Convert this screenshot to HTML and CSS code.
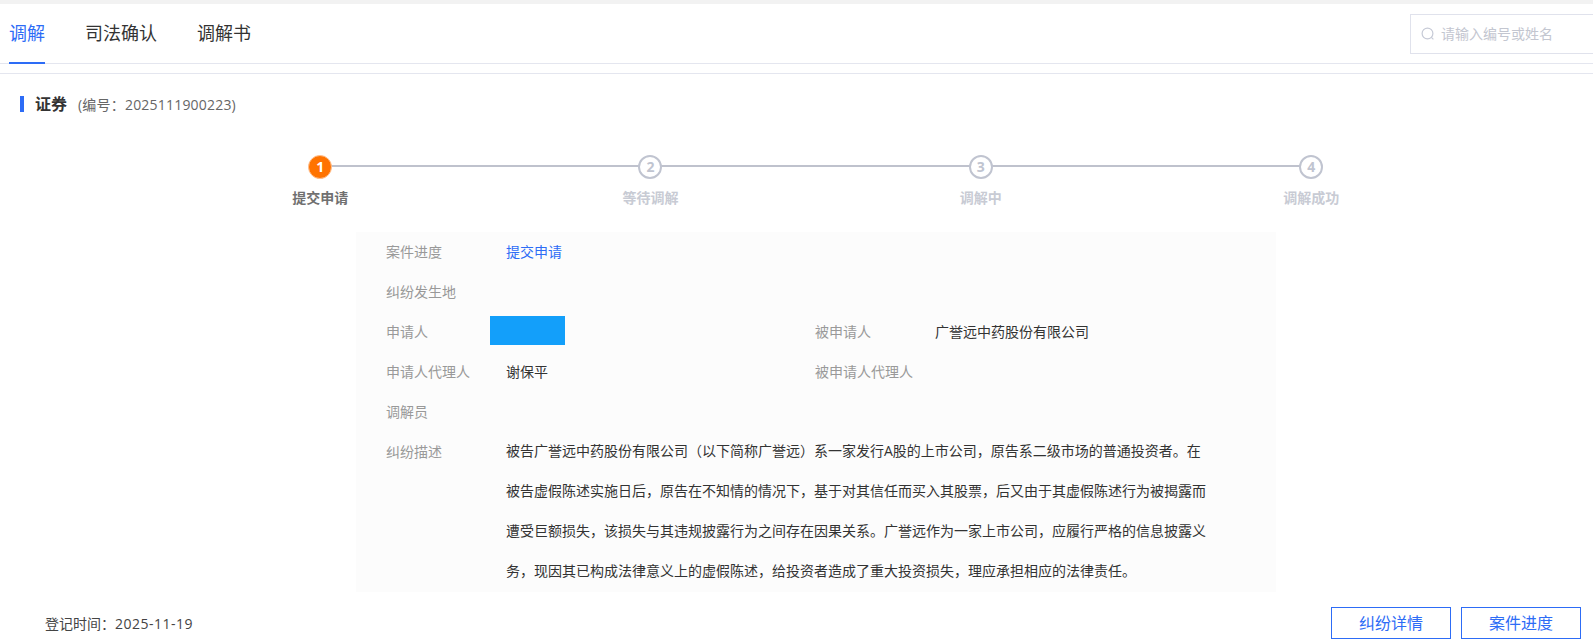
FILE: index.html
```html
<!DOCTYPE html>
<html lang="zh-CN">
<head>
<meta charset="utf-8">
<title>调解</title>
<link rel="stylesheet" href="styles.css">
</head>
<body>
<div class="page">
  <header class="topbar">
    <nav class="tabs">
      <a class="tab active">调解</a>
      <a class="tab">司法确认</a>
      <a class="tab">调解书</a>
    </nav>
    <div class="search">
      <svg class="search-icon" width="14" height="14" viewBox="0 0 14 14" fill="none" stroke="#c6cad6" stroke-width="1.2"><circle cx="6.5" cy="6.5" r="5.4"/><path d="M10.4 10.4 12.4 12.4"/></svg>
      <span class="placeholder">请输入编号或姓名</span>
    </div>
  </header>
  <div class="title-row">
    <h1 class="title">证券</h1>
    <span class="case-no">(编号&#xFF1A;2025111900223)</span>
  </div>
  <ol class="steps">
    <li class="step current"><span class="dot">1</span><span class="step-label">提交申请</span></li>
    <li class="step"><span class="dot">2</span><span class="step-label">等待调解</span></li>
    <li class="step"><span class="dot">3</span><span class="step-label">调解中</span></li>
    <li class="step"><span class="dot">4</span><span class="step-label">调解成功</span></li>
  </ol>
  <section class="panel">
    <div class="row"><span class="label">案件进度</span><span class="value link">提交申请</span></div>
    <div class="row"><span class="label">纠纷发生地</span></div>
    <div class="row two">
      <div class="cell"><span class="label">申请人</span><span class="value"></span><span class="redact"></span></div>
      <div class="cell"><span class="label">被申请人</span><span class="value">广誉远中药股份有限公司</span></div>
    </div>
    <div class="row two">
      <div class="cell"><span class="label">申请人代理人</span><span class="value">谢保平</span></div>
      <div class="cell"><span class="label">被申请人代理人</span></div>
    </div>
    <div class="row"><span class="label">调解员</span></div>
    <div class="row desc"><span class="label">纠纷描述</span><p class="value">被告广誉远中药股份有限公司&#xFF08;以下简称广誉远&#xFF09;系一家发行A股的上市公司&#xFF0C;原告系二级市场的普通投资者。在<br>被告虚假陈述实施日后&#xFF0C;原告在不知情的情况下&#xFF0C;基于对其信任而买入其股票&#xFF0C;后又由于其虚假陈述行为被揭露而<br>遭受巨额损失&#xFF0C;该损失与其违规披露行为之间存在因果关系。广誉远作为一家上市公司&#xFF0C;应履行严格的信息披露义<br>务&#xFF0C;现因其已构成法律意义上的虚假陈述&#xFF0C;给投资者造成了重大投资损失&#xFF0C;理应承担相应的法律责任。</p></div>
  </section>
  <footer class="footer">
    <span class="reg-time">登记时间&#xFF1A;<span class="date">2025-11-19</span></span>
    <div class="actions">
      <button class="btn">纠纷详情</button>
      <button class="btn">案件进度</button>
    </div>
  </footer>
</div>
</body>
</html>
```
FILE: styles.css
```css
* { box-sizing: border-box; }
html, body { margin: 0; padding: 0; background: #fff; }
body { font-family: "Open Sans", "Noto Sans CJK SC", sans-serif; color: #333; overflow: hidden; }
.page { width: 1593px; height: 644px; border-top: 4px solid #f2f2f2; overflow: hidden; }

.topbar { display: flex; justify-content: space-between; height: 60px; border-bottom: 1px solid #e4e6ef; }
.tabs { display: flex; gap: 40px; padding-left: 9px; }
.tab { height: 60px; line-height: 58px; font-size: 18px; color: #333; }
.tab.active { color: #2d6cf6; border-bottom: 2px solid #2d6cf6; }
.search { display: flex; align-items: center; gap: 6px; width: 183px; height: 40px; margin-top: 10px; padding-left: 10px; border: 1px solid #e0e2ec; border-right: 0; }
.search-icon { flex: none; }
.placeholder { padding-bottom: 2px; font-size: 14px; color: #c3c6d0; }

.title-row { display: flex; align-items: center; height: 57px; margin-top: 9px; padding: 4px 0 0 20px; border-top: 1px solid #e4e6ef; }
.title { margin: 0; padding-left: 11px; border-left: 4px solid #2d6cf6; font-size: 16px; font-weight: 700; line-height: 16px; color: #333; }
.case-no { margin-left: 11px; font-size: 14px; letter-spacing: 0.2px; color: #666; }

.steps { display: grid; grid-template-columns: repeat(4, 330.33px); margin: 25px 0 0 155px; padding: 0; list-style: none; }
.step { position: relative; display: flex; flex-direction: column; align-items: center; }
.step:not(:last-child)::after { content: ""; position: absolute; top: 10px; left: 50%; width: 100%; height: 2px; background: #bfc2cd; }
.dot { position: relative; z-index: 1; width: 24px; height: 24px; border: 2px solid #c0c4d0; border-radius: 50%; background: #fff; font-size: 14px; font-weight: 700; line-height: 20px; text-align: center; color: #c0c4d0; }
.step.current .dot { border-color: #ffc08f; border-width: 1px; background: #ff7300; color: #fff; line-height: 22px; }
.step-label { margin-top: 9px; font-size: 14px; font-weight: 700; line-height: 20px; color: #c8cbd4; }
.step.current .step-label { color: #707070; }

.panel { width: 920px; height: 360px; margin: 24px 0 0 356px; padding: 0 30px; background: #fcfcfc; overflow: hidden; }
.row { display: flex; min-height: 40px; font-size: 14px; line-height: 40px; }
.two .cell { position: relative; display: flex; width: 429px; }
.label { flex: none; width: 120px; color: #999; }
.value { margin: 0; color: #333; }
.link { color: #2d6cf6; }
.redact { position: absolute; top: 4px; left: 104px; width: 75px; height: 29px; background: #139ffa; }
.desc .value { margin-top: -1px; white-space: nowrap; line-height: 40px; }

.footer { display: flex; justify-content: space-between; align-items: center; margin-top: 15px; padding: 0 12px 0 45px; }
.reg-time { font-size: 14px; color: #444; }
.date { letter-spacing: 0.5px; }
.actions { display: flex; gap: 10px; }
.btn { width: 120px; height: 32px; padding: 0; border: 1px solid #2d6cf6; border-radius: 0; background: #fff; font-family: inherit; font-size: 16px; line-height: 28px; color: #2d6cf6; }
```
